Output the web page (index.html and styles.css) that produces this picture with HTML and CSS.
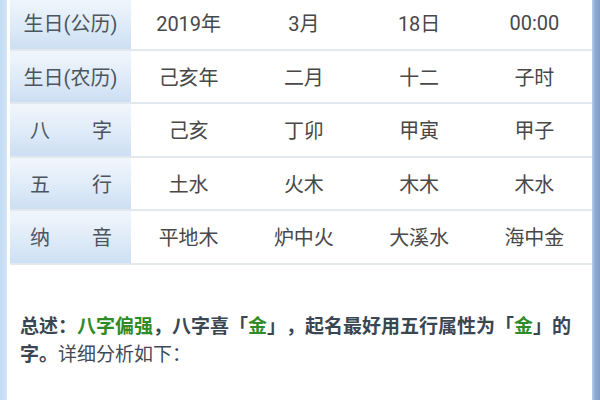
FILE: index.html
```html
<!DOCTYPE html>
<html lang="zh-CN">
<head>
<meta charset="utf-8">
<link rel="stylesheet" href="styles.css">
</head>
<body>
<div class="frame">
  <div class="strip-left"></div>
  <main class="main">
    <div class="table">
      <div class="row">
        <div class="head">生日(公历)</div>
        <div class="cell">2019年</div>
        <div class="cell">3月</div>
        <div class="cell">18日</div>
        <div class="cell">00:00</div>
      </div>
      <div class="row">
        <div class="head">生日(农历)</div>
        <div class="cell">己亥年</div>
        <div class="cell">二月</div>
        <div class="cell">十二</div>
        <div class="cell">子时</div>
      </div>
      <div class="row">
        <div class="head spread"><span>八</span><span>字</span></div>
        <div class="cell">己亥</div>
        <div class="cell">丁卯</div>
        <div class="cell">甲寅</div>
        <div class="cell">甲子</div>
      </div>
      <div class="row">
        <div class="head spread"><span>五</span><span>行</span></div>
        <div class="cell">土水</div>
        <div class="cell">火木</div>
        <div class="cell">木木</div>
        <div class="cell">木水</div>
      </div>
      <div class="row">
        <div class="head spread"><span>纳</span><span>音</span></div>
        <div class="cell">平地木</div>
        <div class="cell">炉中火</div>
        <div class="cell">大溪水</div>
        <div class="cell">海中金</div>
      </div>
    </div>
    <p class="summary"><b>总述：<span class="green">八字偏强</span>，八字喜「<span class="green">金</span>」，起名最好用五行属性为「<span class="green">金</span>」的字。</b>详细分析如下：</p>
  </main>
  <div class="strip-right"></div>
</div>
</body>
</html>
```

FILE: styles.css
```css
html, body {
  margin: 0;
  padding: 0;
  background: #ffffff;
}

body {
  font-family: Roboto, "Noto Sans CJK SC", sans-serif;
  color: #464b50;
  overflow: hidden;
}

.frame {
  display: flex;
  width: 600px;
  height: 400px;
  overflow: hidden;
}

.strip-left {
  width: 7px;
  flex: none;
  background: linear-gradient(to right, #c4dbf3, #d3e5f7);
}

.strip-right {
  width: 8px;
  flex: none;
  background: linear-gradient(to right, #b9cfe9, #8eaad2 40%, #7f9dc8);
}

.main {
  flex: 1;
  min-width: 0;
  padding-left: 3px;
}

.table {
  margin-top: -3px;
}

.row {
  display: grid;
  grid-template-columns: 121px repeat(4, 1fr);
  height: 51.5px;
  border-bottom: 2px solid #e2e8ee;
}

.head {
  display: flex;
  align-items: center;
  justify-content: center;
  font-size: 20px;
  color: #4c555e;
  background: linear-gradient(to bottom, #f1f6fc 0%, #e2edf9 45%, #cddff3 100%);
}

.head.spread {
  gap: 42px;
  padding-left: 1px;
}

.cell {
  display: flex;
  align-items: center;
  justify-content: center;
  font-size: 20px;
  color: #484848;
  background: #ffffff;
}

.summary {
  margin: 0;
  padding: 46px 12px 0 10px;
  font-family: "Noto Sans CJK SC", sans-serif;
  font-size: 19px;
  line-height: 28px;
  color: #3f4a55;
  text-spacing-trim: space-all;
  font-feature-settings: "halt" 0, "palt" 0;
}

.summary b {
  font-weight: 700;
  color: #3a4652;
}

.summary .green {
  color: #2e8b25;
}
```
